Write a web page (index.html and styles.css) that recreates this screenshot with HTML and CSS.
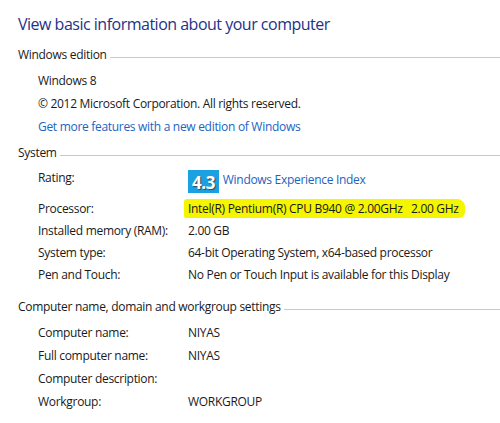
FILE: index.html
```html
<!DOCTYPE html>
<html lang="en">
<head>
<meta charset="UTF-8">
<title>System</title>
<link rel="stylesheet" href="styles.css">
</head>
<body>

<div class="page">
  <h1 class="title">View basic information about your computer</h1>

  <div class="section edition">
    <div class="section-head"><span>Windows edition</span></div>
    <div class="block">
      <div class="line">Windows 8</div>
      <div class="line">© 2012 Microsoft Corporation. All rights reserved.</div>
      <div class="line"><a href="#" class="link">Get more features with a new edition of Windows</a></div>
    </div>
  </div>

  <div class="section system">
    <div class="section-head"><span>System</span></div>
    <div class="rows">
      <div class="row rating">
        <div class="label">Rating:</div>
        <div class="value">
          <span class="badge">4.3</span>
          <a href="#" class="link">Windows Experience Index</a>
        </div>
      </div>
      <div class="row">
        <div class="label">Processor:</div>
        <div class="value"><span class="marker">Intel(R) Pentium(R) CPU B940 @ 2.00GHz&nbsp;&nbsp; 2.00 GHz</span></div>
      </div>
      <div class="row">
        <div class="label">Installed memory (RAM):</div>
        <div class="value">2.00 GB</div>
      </div>
      <div class="row">
        <div class="label">System type:</div>
        <div class="value">64-bit Operating System, x64-based processor</div>
      </div>
      <div class="row">
        <div class="label">Pen and Touch:</div>
        <div class="value">No Pen or Touch Input is available for this Display</div>
      </div>
    </div>
  </div>

  <div class="section naming">
    <div class="section-head"><span>Computer name, domain and workgroup settings</span></div>
    <div class="rows">
      <div class="row">
        <div class="label">Computer name:</div>
        <div class="value">NIYAS</div>
      </div>
      <div class="row">
        <div class="label">Full computer name:</div>
        <div class="value">NIYAS</div>
      </div>
      <div class="row">
        <div class="label">Computer description:</div>
        <div class="value"></div>
      </div>
      <div class="row">
        <div class="label">Workgroup:</div>
        <div class="value">WORKGROUP</div>
      </div>
    </div>
  </div>
</div>

</body>
</html>
```

FILE: styles.css
```css
body {
  margin: 0;
  background: #fff;
  font-family: "Open Sans", "Noto Sans", sans-serif;
  font-size: 12px;
  letter-spacing: -0.3px;
  color: #1a1a1a;
}

.page {
  padding: 12px 0 0 18px;
}

.title {
  margin: 0;
  font-size: 16px;
  font-weight: normal;
  letter-spacing: -0.5px;
  color: #1e3287;
  line-height: 24px;
}

.edition {
  margin-top: 8px;
}

.system {
  margin-top: 4px;
}

.naming {
  margin-top: 10px;
}

.section-head {
  display: flex;
  align-items: center;
  line-height: 22px;
}

.section-head::after {
  content: "";
  flex: 1;
  height: 1px;
  margin: 4px 0 0 3px;
  background: #c9c9c9;
}

.block {
  margin-top: 3px;
  padding-left: 20px;
}

.line {
  line-height: 23px;
}

.link {
  color: #1a64c4;
  text-decoration: none;
}

.rows {
  margin-top: 3px;
  padding-left: 20px;
}

.row {
  display: grid;
  grid-template-columns: 150px 1fr;
  line-height: 22px;
}

.naming .row {
  line-height: 23px;
}

.rating {
  height: 31px;
  align-items: start;
}

.badge {
  display: inline-block;
  width: 31px;
  height: 23px;
  margin-top: 3px;
  overflow: hidden;
  background: #1ba1e2;
  color: #fff;
  font-weight: bold;
  font-size: 17px;
  letter-spacing: -0.5px;
  line-height: 25px;
  text-align: center;
  text-shadow: 1px 1px 1px #3a4a58;
  vertical-align: top;
}

.rating .value .link {
  display: inline-block;
  margin: 2px 0 0 1px;
  line-height: 22px;
  vertical-align: top;
}

.marker {
  background: #f5f500;
  padding: 1px 6px 1px 4px;
  margin-left: -4px;
  border-radius: 3px 8px 6px 2px;
}
```
